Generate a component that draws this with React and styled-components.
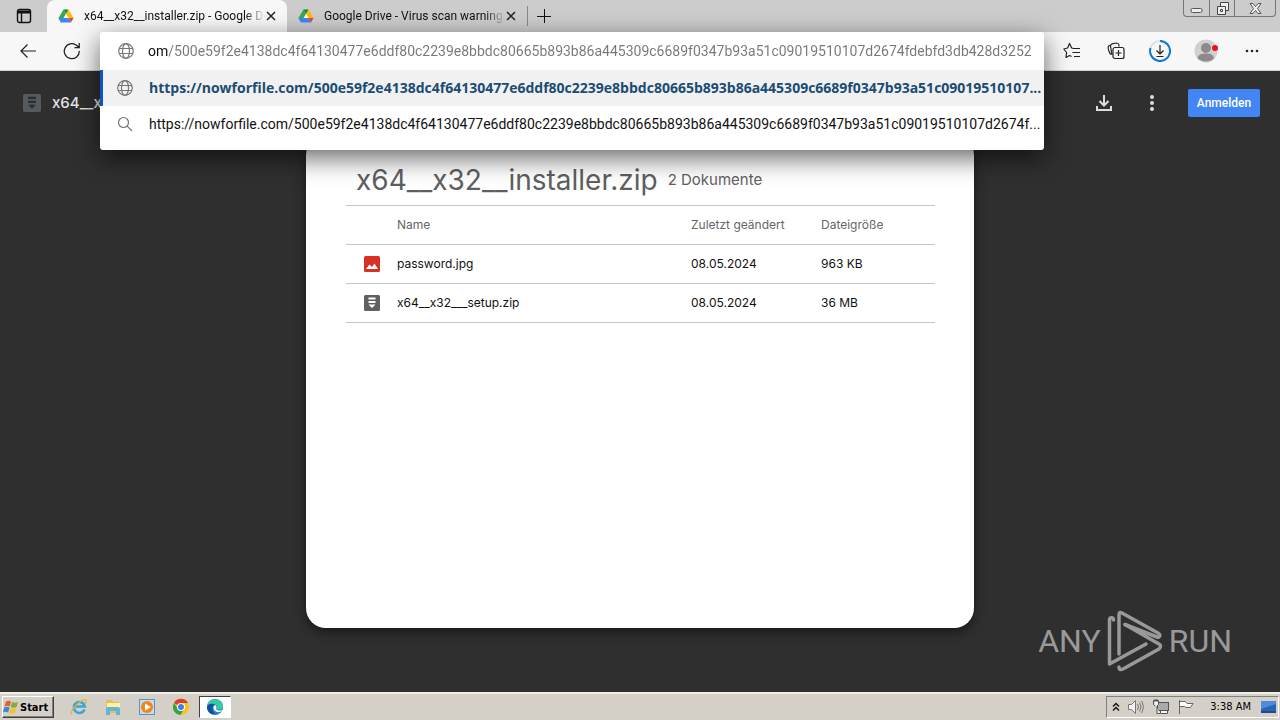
import { useState } from "react";
import styled, { createGlobalStyle, css } from "styled-components";

const URL_TEXT = "https://nowforfile.com/500e59f2e4138dc4f64130477e6ddf80c2239e8bbdc80665b893b86a445309c6689f0347b93a51c09019510107d2674fdebfd3db428d3252";

const files = [
    { name: "password.jpg", date: "08.05.2024", size: "963 KB", icon: <ImageFileIcon /> },
    { name: "x64__x32___setup.zip", date: "08.05.2024", size: "36 MB", icon: <ZipIcon /> },
];

// shortens up to and including the given piece
function shorten (text, lastPiece) {
    return text.slice(0, text.indexOf(lastPiece) + lastPiece.length) + "...";
}

export default function App () {

    return (
        <>
            <GlobalStyle />
            <Desktop>
                <TabStrip />
                <Toolbar />
                <DrivePage />
                <Taskbar />
            </Desktop>
        </>
    );
};

function TabStrip () {
    return (
        <Strip>
            <TabActions aria-label="Tab actions"><TabActionsIcon /></TabActions>
            <Tab $active>
                <DriveIcon />
                <TabTitle>x64__x32__installer.zip - Google D</TabTitle>
                <TabClose aria-label="Close tab"><CloseIcon /></TabClose>
            </Tab>
            <Tab>
                <DriveIcon />
                <TabTitle>Google Drive - Virus scan warning</TabTitle>
                <TabClose aria-label="Close tab"><CloseIcon /></TabClose>
            </Tab>
            <NewTab aria-label="New tab">
                <svg width="16" height="16" stroke="#111" strokeWidth="1" shapeRendering="crispEdges"><path d="M1 8.500H15M8.500 1V15" /></svg>
            </NewTab>
            <WindowButtons>
                <WindowButton aria-label="Minimize">
                    <svg width="13" height="13" fill="#eee" stroke="#555"><rect x="1" y="6.500" width="11" height="4" rx="1.500" /></svg>
                </WindowButton>
                <WindowButton aria-label="Restore">
                    <svg width="13" height="13" fill="#eee" stroke="#444"><path d="M4.500 .5H12.500V8.500H9V4.500H4.500Z" /><path d="M1.500 4.500H9.500V12.500H1.500Z" /><path d="M4.500 7.500H6.500V9.500H4.500Z" /></svg>
                </WindowButton>
                <WindowButton $wide aria-label="Close">
                    <svg width="13" height="13" fill="#eee" stroke="#555"><path d="M1 1.500H4L6.500 4.500L9 1.500H12L8.500 6.500L12 11.500H9L6.500 8.500L4 11.500H1L4.500 6.500Z" /></svg>
                </WindowButton>
            </WindowButtons>
        </Strip>
    );
}

function Toolbar () {

    const [address, setAddress] = useState(URL_TEXT.slice(URL_TEXT.indexOf("om/")));

    return (
        <Bar>
            <ToolButton aria-label="Back">
                <svg width="18" height="16" fill="none" stroke="#222" strokeWidth="1.200"><path d="M17 8H2M8.500 1.500L2 8L8.500 14.500" /></svg>
            </ToolButton>
            <ToolButton aria-label="Refresh">
                <svg width="18" height="18" fill="none" stroke="#222" strokeWidth="1.300"><path d="M16.300 9A7.500 7.500 0 1 1 13.500 3.300L16 5.500M16.200 1V5.700H11.500" /></svg>
            </ToolButton>
            <AddressArea>
                <Popup>
                    <AddressRow>
                        <GlobeIcon />
                        <AddressInput
                            aria-label="Address"
                            value={address}
                            onChange={(e) => setAddress(e.target.value)}
                        />
                    </AddressRow>
                    <Suggestion $selected>
                        <GlobeIcon />
                        <SuggestionText>{shorten(URL_TEXT, "510107")}</SuggestionText>
                    </Suggestion>
                    <Suggestion>
                        <svg width="16" height="16" fill="none" stroke="#777" strokeWidth="1.200"><circle cx="6.500" cy="6.500" r="5" /><path d="M10.200 10.200L15 15" /></svg>
                        <SuggestionText>{shorten(URL_TEXT, "d2674f")}</SuggestionText>
                    </Suggestion>
                </Popup>
            </AddressArea>
            <ToolActions>
                <ToolButton aria-label="Favorites">
                    <svg width="18" height="18" fill="none" stroke="#222" strokeWidth="1.200" strokeLinejoin="round">
                        <path d="M10.800 6.500L8.700 6L6.500 1.500L4.600 6L.8 7L3.600 10.500L3 15.500L6.500 13.500L8.500 14.500M10.500 6.500H17M9.500 10.500H17M11 14.500H17" />
                    </svg>
                </ToolButton>
                <ToolButton aria-label="Collections">
                    <svg width="18" height="18" fill="none" stroke="#222" strokeWidth="1.200">
                        <path d="M4 12.500C2.500 11.500 .8 6.500 1.200 5C1.400 3.800 2 3.500 3 3.200M5 13L3.500 4C3.500 2.500 4 2 5 1.800L9.500 1C11 1 11.800 1.500 12 3V4.500" />
                        <rect x="6" y="5.500" width="11" height="11" rx="2" fill="#f7f7f7" /><path d="M11.500 8V14M8.500 11H14.500" />
                    </svg>
                </ToolButton>
                <ToolButton aria-label="Downloads">
                    <svg width="22" height="22" fill="none">
                        <circle cx="11" cy="11" r="10" stroke="#d5dce3" strokeWidth="1.500" />
                        <path d="M11 1A10 10 0 1 1 1.500 8" stroke="#0f78d4" strokeWidth="2" />
                        <path d="M11 5V14M7.500 10.500L11 14L14.500 10.500M7.500 16.500H14.500" stroke="#222" strokeWidth="1.200" />
                    </svg>
                </ToolButton>
                <ToolButton $wide aria-label="Profile">
                    <svg width="24" height="24">
                        <circle cx="12" cy="12" r="11.500" fill="#d2d0ce" />
                        <circle cx="12" cy="9" r="5" fill="#8d8b8a" />
                        <path d="M3.500 19C5 15 8 14.500 12 14.500S18.500 15 20 19C17 23.500 7 23.500 3.500 19Z" fill="#8d8b8a" />
                        <circle cx="21" cy="9" r="3" fill="#e81123" />
                    </svg>
                </ToolButton>
                <ToolButton aria-label="Settings and more">
                    <svg width="16" height="16" fill="#222"><circle cx="3" cy="8" r="1.300" /><circle cx="8" cy="8" r="1.300" /><circle cx="13" cy="8" r="1.300" /></svg>
                </ToolButton>
            </ToolActions>
        </Bar>
    );
}

function DrivePage () {
    return (
        <Page>
            <PageHeader>
                <ZipIcon dim />
                <PageName>x64__x32__installer.zip</PageName>
                <IconButton aria-label="Herunterladen">
                    <svg width="18" height="18" fill="none" stroke="#ddd" strokeWidth="2"><path d="M9 1V11M4.500 7L9 11.500L13.500 7M2 12V16H16V12" /></svg>
                </IconButton>
                <IconButton aria-label="Weitere Aktionen">
                    <svg width="6" height="18" fill="#ddd"><circle cx="3" cy="3" r="2" /><circle cx="3" cy="9" r="2" /><circle cx="3" cy="15" r="2" /></svg>
                </IconButton>
                <SignIn>Anmelden</SignIn>
            </PageHeader>
            <Card>
                <CardHeading>
                    <h1>x64__x32__installer.zip</h1>
                    <span>2 Dokumente</span>
                </CardHeading>
                <FileTable>
                    <thead>
                        <tr>
                            <IconHead aria-label="Typ" />
                            <th>Name</th>
                            <DateHead>Zuletzt geändert</DateHead>
                            <SizeHead>Dateigröße</SizeHead>
                        </tr>
                    </thead>
                    <tbody>
                        {files.map((file) => (
                            <tr key={file.name}>
                                <IconCell>{file.icon}</IconCell>
                                <td>{file.name}</td>
                                <td>{file.date}</td>
                                <td>{file.size}</td>
                            </tr>
                        ))}
                    </tbody>
                </FileTable>
            </Card>
            <Watermark>
                <span>ANY</span>
                <svg width="56" height="62" viewBox="0 0 56 62" fill="none" stroke="#999" strokeWidth="3.500" strokeLinejoin="round" strokeLinecap="round">
                    <path d="M6.500 10C6.500 7 2.500 7 2.500 10V54L39 34" />
                    <path d="M12 44V5C12 2 13 2 15 3L51 23C54 25 53 28 50 27L18 14.500" />
                    <path d="M12 57C12 60 14 60 16 59L52 39C54 37 54 35 52 34L18 14.500" />
                </svg>
                <span>RUN</span>
            </Watermark>
        </Page>
    );
}

function Taskbar () {
    return (
        <TaskbarRow>
            <StartButton><WindowsIcon />Start</StartButton>
            <TaskButton aria-label="Internet Explorer">
                <svg width="18" height="18" fill="none">
                    <path d="M14.500 11.500A5.500 5.500 0 1 1 14.800 8.500H5" stroke="#38a5dc" strokeWidth="2.600" />
                    <path d="M2 16C-2 14 12 0 16 2C17 3 16 5 15.500 6" stroke="#e3b431" strokeWidth="1.300" />
                </svg>
            </TaskButton>
            <TaskButton aria-label="Explorer">
                <svg width="18" height="18">
                    <path d="M2 2H8L9 4H15V15H2Z" fill="#dfc05a" /><path d="M3 5H16V10H3Z" fill="#fff0a8" />
                    <path d="M2 17V11Q2 9 4 9H14Q16 9 16 11V17H12V13H6V17Z" fill="#63b5d5" />
                </svg>
            </TaskButton>
            <TaskButton aria-label="Media Player">
                <svg width="18" height="18">
                    <rect x="1.500" y="1.500" width="15" height="15" fill="#c2dcf0" stroke="#5b92bf" />
                    <circle cx="9" cy="9" r="6" fill="#f58418" /><path d="M7 5.500V12.500L13 9Z" fill="#fff" />
                </svg>
            </TaskButton>
            <TaskButton aria-label="Chrome">
                <svg width="18" height="18">
                    <circle cx="9" cy="9" r="8" fill="#f9c513" />
                    <path d="M9 9L2 5A8 8 0 0 1 16 5H9Z" fill="#e33b2e" />
                    <path d="M2 5A8 8 0 0 0 8.500 17L12 11L6 11Z" fill="#2fa24c" />
                    <circle cx="9" cy="9" r="4" fill="#fff" /><circle cx="9" cy="9" r="3" fill="#3d7fe6" />
                </svg>
            </TaskButton>
            <TaskButton $pressed aria-label="Edge">
                <svg width="18" height="18">
                    <circle cx="9" cy="9" r="8" fill="#1684d0" />
                    <path d="M1 9C1 -1 17 -1 17 8C17 12 12 12.500 10.500 11C12 9 10 6 7 6C4 6 2 7 1 9Z" fill="#37c8a4" />
                    <path d="M1 9C2 5 7 5 9 7C6 7 5 12 9 16C4 17 1 13 1 9Z" fill="#124f9d" />
                    <path d="M9 7C12 9 9 11 11 12S15 12.500 16.500 12C14 16 7 14 7.500 9Q8 7.500 9 7Z" fill="#fff" />
                </svg>
            </TaskButton>
            <Tray>
                <svg width="8" height="10" fill="none" stroke="#111" strokeWidth="1.400"><path d="M1 4.500L4 1.500L7 4.500M1 8.500L4 5.500L7 8.500" /></svg>
                <svg width="18" height="16" fill="#f3f3f3" stroke="#777"><path d="M1.500 5.500H4.500L8.500 1.500V14.500L4.500 10.500H1.500Z" /><path d="M10.500 5Q12.500 8 10.500 11M12.500 3.500Q15.500 8 12.500 12.500M14.500 2Q18 8 14.500 14" fill="none" /></svg>
                <svg width="18" height="16" fill="#f3f3f3" stroke="#555"><rect x="5.500" y="3.500" width="11" height="8" fill="#aaa" /><path d="M8.500 12V14.500H15.500V12" /><path d="M1.500 1.500H6.500V5.500L5 7V14.500H8M3 7L1.500 5.500V1.500M3 0V3M5 0V3" /></svg>
                <svg width="18" height="16" fill="#fff" stroke="#666"><path d="M2.500 1V15M2.500 2.500H8.500L10 4.500H16L13.500 8.500H9L7.500 7.500H2.500Z" /></svg>
                <Clock>3:38 AM</Clock>
                <svg width="16" height="14"><rect x="1" y="1" width="15" height="11" fill="#2865b8" /><path d="M1 1H16V4L1 9Z" fill="#4d8bdc" /><path d="M1 11H16V13H1Z" fill="#234b82" /></svg>
            </Tray>
        </TaskbarRow>
    );
}

function DriveIcon () {
    return (
        <svg width="16" height="16" viewBox="0 0 16 16">
            <path d="M5.500 1.500H10.500L8 6Z" fill="#188038" />
            <path d="M5.500 1.500L.5 10L3 14.500L8 6Z" fill="#34a853" />
            <path d="M10.500 1.500L15.500 10H10.500L8 6Z" fill="#fbbc04" />
            <path d="M10.500 10H15.500L13 14.500Z" fill="#ea4335" />
            <path d="M.5 10H10.500L13 14.500H3Z" fill="#4285f4" />
            <path d="M8 6L10.500 10H5.500Z" fill="#fff" />
        </svg>
    );
}

function TabActionsIcon () {
    return (
        <svg width="16" height="16" fill="none" stroke="#111" strokeWidth="1.400"><rect x="1.500" y="1.500" width="13" height="13" rx="2" /><path d="M2 4H14" strokeWidth="3" /><path d="M5.500 4V14" /></svg>
    );
}

function CloseIcon () {
    return (
        <svg width="10" height="10" stroke="#222" strokeWidth="1.500"><path d="M1 1L9 9M9 1L1 9" /></svg>
    );
}

function GlobeIcon () {
    return (
        <svg width="16" height="16" fill="none" stroke="#777" strokeWidth="1.200">
            <circle cx="8" cy="8" r="7.300" /><ellipse cx="8" cy="8" rx="3.500" ry="7.300" /><path d="M1.500 5.500H14.500M1.500 10.500H14.500" />
        </svg>
    );
}

function ImageFileIcon () {
    return (
        <svg width="16" height="16"><rect width="16" height="16" rx="1.500" fill="#d93025" /><path d="M2 13L5.500 8.500L8 11L10.500 7.500L14 13Z" fill="#fff" /></svg>
    );
}

function ZipIcon ({ dim }) {
    return (
        <svg width={dim ? 18 : 16} height={dim ? 18 : 16} viewBox="0 0 16 16">
            <rect width="16" height="16" rx="1.500" fill={dim ? "#555a5f" : "#5f6064"} />
            <path d="M4.500 2.500H11.500V4.500H4.500ZM4.500 6H11.500V8H4.500ZM4.500 9.500H11.500L8 13Z" fill={dim ? "#2b2d2f" : "#fff"} />
        </svg>
    );
}

function WindowsIcon () {
    return (
        <svg width="16" height="14">
            <path d="M3 1.500Q5.500 0 8 1.500L6.800 6.500Q4 5 1.500 6.500Z" fill="#e8602c" />
            <path d="M9 2Q12 3.500 15 2L13.500 7Q11 8.500 7.800 7Z" fill="#7dae35" />
            <path d="M1.300 7.500Q4 6 6.500 7.500L5.200 12.500Q2.500 11 0 12.500Z" fill="#3c88cc" />
            <path d="M7.500 8Q10.500 9.500 13.300 8L12 13Q9 14.500 6.200 13Z" fill="#f3c02c" />
        </svg>
    );
}

const GlobalStyle = createGlobalStyle`
    * {
        box-sizing: border-box;
    }

    body {
        margin: 0;
        font-family: Roboto, sans-serif;
    }

    button {
        padding: 0;
        border: 0;
        background: none;
        font: inherit;
    }

    svg {
        display: block;
        flex: none;
    }
`;

const Desktop = styled.div`
    display: flex;
    flex-direction: column;
    height: 100vh;
    min-height: 480px;
    overflow: hidden;
`;

const Strip = styled.div`
    display: flex;
    height: 32px;
    background-color: #cccccc;
`;

const TabActions = styled.button`
    display: grid;
    place-items: center;
    width: 47px;
`;

const Tab = styled.div`
    display: flex;
    align-items: center;
    width: 240px;
    padding: 0 10px 0 11px;
    ${({ $active }) => $active && css`
        border-radius: 8px 8px 0 0;
        background-color: #f7f7f7;
    `}
`;

const TabTitle = styled.span`
    flex: 1;
    margin: 0 0 0 10px;
    overflow: hidden;
    white-space: nowrap;
    font-size: 12px;
    line-height: 16px;
    color: #111;
    mask-image: linear-gradient(to right, #000 calc(100% - 20px), transparent);
`;

const TabClose = styled.button`
    display: grid;
    place-items: center;
    width: 12px;
    height: 16px;
`;

const NewTab = styled.button`
    display: grid;
    place-items: center;
    width: 32px;
    height: 20px;
    margin-top: 6px;
    border-left: 1px solid #888;
`;

const WindowButtons = styled.div`
    display: flex;
    height: 17px;
    margin-left: auto;
    margin-right: 4px;
    border: 1px solid #777;
    border-top: 0;
    border-radius: 0 0 4px 4px;
`;

const WindowButton = styled.button`
    display: grid;
    place-items: center;
    width: ${({ $wide }) => ($wide ? "41px" : "25px")};

    & + & {
        border-left: 1px solid #777;
    }
`;

const Bar = styled.div`
    display: flex;
    align-items: center;
    height: 39px;
    padding: 0 16px;
    border-bottom: 1px solid #d0d0d0;
    background-color: #f7f7f7;
`;

const ToolButton = styled.button`
    display: grid;
    place-items: center;
    width: ${({ $wide }) => ($wide ? "28px" : "24px")};
    height: 24px;

    & + & {
        margin-left: 20px;
    }
`;

const ToolActions = styled.div`
    display: flex;
    margin-left: 16px;
`;

const AddressArea = styled.div`
    position: relative;
    align-self: stretch;
    flex: 1;
    margin-left: 16px;
`;

/* opens over the page below the toolbar */
const Popup = styled.div`
    position: absolute;
    z-index: 2;
    top: 0;
    left: 0;
    right: 0;
    padding-bottom: 8px;
    border-radius: 3px;
    background-color: #fff;
    box-shadow: 0 8px 26px rgba(0, 0, 0, 0.6);
`;

const AddressRow = styled.div`
    display: flex;
    align-items: center;
    gap: 14px;
    height: 38px;
    padding: 0 3px 0 18px;
`;

const AddressInput = styled.input`
    flex: 1;
    min-width: 0;
    padding: 0;
    border: 0;
    outline: 0;
    font-family: Roboto, sans-serif;
    font-size: 14px;
    line-height: 20px;
    /* the host part is darker than the path */
    background: linear-gradient(to right, #111 20px, #777 20px);
    background-clip: text;
    -webkit-text-fill-color: transparent;
`;

const Suggestion = styled.div`
    display: flex;
    align-items: center;
    gap: 16px;
    height: 36px;
    padding: 0 2px 0 14px;
    border-left: 3px solid transparent;
    font-size: 14px;
    line-height: 20px;
    color: #111;
    ${({ $selected }) => $selected && css`
        border-left-color: #0f56c4;
        background-color: #f1f1f1;
        font-family: "Open Sans", sans-serif;
        font-weight: 700;
        color: #1b4c74;
    `}
`;

const SuggestionText = styled.span`
    flex: 1;
    overflow: hidden;
    white-space: nowrap;
    text-overflow: ellipsis;
`;

const Page = styled.main`
    position: relative;
    display: flex;
    flex: 1;
    flex-direction: column;
    min-height: 0;
    padding-bottom: 64px;
    background-color: #2f2f2f;
    font-family: Inter, sans-serif;
`;

const PageHeader = styled.header`
    display: flex;
    align-items: center;
    height: 64px;
    padding: 0 20px 0 23px;
`;

const PageName = styled.span`
    flex: 1;
    margin-left: 11px;
    font-size: 15px;
    font-weight: 500;
    line-height: 20px;
    color: #e3e3e3;
`;

const IconButton = styled.button`
    display: grid;
    place-items: center;
    width: 24px;
    height: 24px;
    margin-right: 24px;
`;

const SignIn = styled.button`
    width: 72px;
    height: 28px;
    border-radius: 2px;
    background-color: #4285f4;
    font-family: Roboto, sans-serif;
    font-size: 12px;
    font-weight: 500;
    color: #fff;
`;

const Card = styled.section`
    flex: 1;
    width: 100%;
    max-width: 668px;
    min-height: 0;
    margin: 0 auto;
    padding: 20px 39px 0 40px;
    border-radius: 20px;
    background-color: #fff;
    box-shadow: 0 4px 12px rgba(0, 0, 0, 0.5);
`;

const CardHeading = styled.div`
    display: flex;
    align-items: center;
    gap: 10px;
    height: 50px;
    padding-left: 10px;
    color: #5f5f5f;

    h1 {
        margin: 0;
        font-size: 28px;
        font-weight: 400;
        line-height: 40px;
    }

    span {
        font-size: 15px;
        line-height: 20px;
    }
`;

const FileTable = styled.table`
    width: 100%;
    table-layout: fixed;
    border-collapse: collapse;
    border-top: 1px solid #c6c6c6;
    font-size: 12px;
    line-height: 16px;
    color: #111;

    th, td {
        height: 39px;
        padding: 0;
        border-bottom: 1px solid #c6c6c6;
        text-align: left;
    }

    th {
        font-weight: 400;
        color: #666;
    }
`;

const IconHead = styled.th`
    width: 51px;
`;

const DateHead = styled.th`
    width: 130px;
`;

const SizeHead = styled.th`
    width: 114px;
`;

const IconCell = styled.td`
    svg {
        margin-left: 18px;
    }
`;

const Watermark = styled.div`
    position: absolute;
    right: 48px;
    bottom: 20px;
    display: flex;
    align-items: center;
    gap: 6px;
    font-family: Roboto, sans-serif;
    font-size: 32px;
    line-height: 40px;
    color: #999;
`;

const TaskbarRow = styled.footer`
    display: flex;
    align-items: center;
    height: 28px;
    padding-left: 2px;
    border-top: 2px solid #f2efe8;
    background-color: #d4d0c8;
`;

const StartButton = styled.button`
    display: flex;
    align-items: center;
    gap: 1px;
    width: 52px;
    height: 22px;
    margin-right: 9px;
    border: 1px solid;
    border-color: #fff #404040 #404040 #fff;
    box-shadow: inset -1px -1px #808080;
    font-family: "DejaVu Sans Condensed", "DejaVu Sans", sans-serif;
    font-size: 11px;
    font-weight: 700;
    color: #000;
`;

const TaskButton = styled.button`
    display: grid;
    place-items: center;
    width: 32px;
    height: 22px;
    margin-right: 2px;
    ${({ $pressed }) => $pressed && css`
        border: 1px solid;
        border-color: #404040 #fff #fff #404040;
        background-color: #fff;
    `}
`;

const Tray = styled.div`
    display: flex;
    align-items: center;
    gap: 7px;
    height: 22px;
    margin-left: auto;
    margin-right: 1px;
    padding: 0 2px 0 5px;
    border: 1px solid;
    border-color: #808080 #fff #fff #808080;
`;

const Clock = styled.time`
    margin: 0 2px 0 8px;
    font-family: "DejaVu Sans Condensed", "DejaVu Sans", sans-serif;
    font-size: 11px;
    line-height: 16px;
    color: #000;
`;
